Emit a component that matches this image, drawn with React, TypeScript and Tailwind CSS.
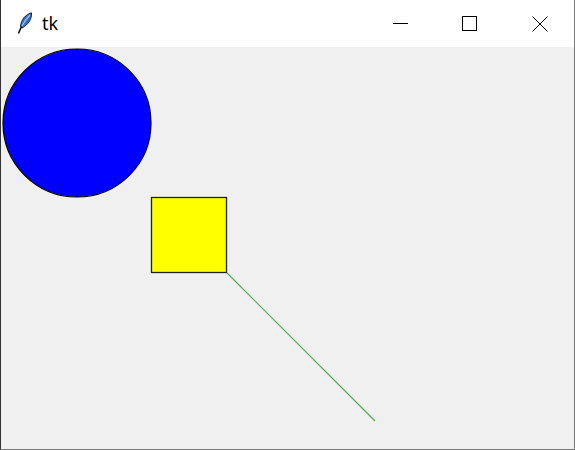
import React from 'react';

const Feather = () => (
    <svg width="16" height="22" viewBox="0 0 16 22" className="block">
        <path d="M14.5 0.8 C 8.5 2.5, 4 7.5, 3.5 14.5 L 5 16 C 11.5 12.5, 15 7, 14.5 0.8 Z" fill="#3a6fc0" stroke="#14294a" strokeWidth="1" />
        <path d="M13 3 C 10 6, 7.5 9, 5 14" stroke="#9cc3f0" strokeWidth="1.2" fill="none" />
        <path d="M4.2 15.2 L 1.8 20.8" stroke="#111" strokeWidth="1.6" strokeLinecap="round" />
    </svg>
);

export default function App() {
    return (
        <div className="w-[575px] h-[450px] flex flex-col bg-[#f0f0f0] border-l border-l-[#333] border-r border-r-[#7a7a7a] border-b border-b-[#7a7a7a] overflow-hidden">
            {/* title bar */}
            <div className="h-[47px] shrink-0 bg-white flex items-center">
                <div className="ml-[16px] -mt-[2px]">
                    <Feather />
                </div>
                <span className="ml-[9px] -mt-[1px] text-[18px] text-black leading-none font-['Segoe_UI','Noto_Sans',sans-serif]">tk</span>
                <div className="ml-auto flex items-center h-full">
                    <div className="w-[46px] h-full flex items-center justify-center mr-[23px]">
                        <div className="w-[15px] h-px bg-black" />
                    </div>
                    <div className="w-[46px] h-full flex items-center justify-center mr-[25px]">
                        <div className="w-[15px] h-[15px] border border-black" />
                    </div>
                    <div className="w-[46px] h-full flex items-center justify-center mr-[11px]">
                        <svg width="16" height="16" viewBox="0 0 16 16">
                            <path d="M0.5 0.5 L15.5 15.5 M15.5 0.5 L0.5 15.5" stroke="#000" strokeWidth="1" />
                        </svg>
                    </div>
                </div>
            </div>
            {/* canvas */}
            <div className="flex-1">
                <svg width="573" height="402" viewBox="0 0 573 402" className="block">
                    <circle cx="76" cy="76" r="74" fill="#0000ff" stroke="#000" strokeWidth="1.2" />
                    <rect x="150.5" y="150.5" width="75" height="75" fill="#ffff00" stroke="#222" strokeWidth="1.3" />
                    <line x1="226" y1="226" x2="374" y2="374" stroke="#4caf50" strokeWidth="1.2" />
                </svg>
            </div>
        </div>
    );
}
